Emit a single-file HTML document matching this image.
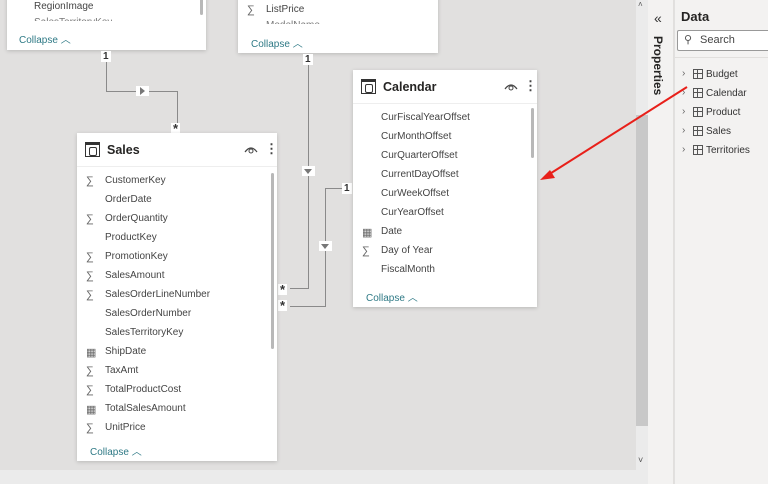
<!DOCTYPE html><html><head><style>
*{margin:0;padding:0;box-sizing:border-box}
body{width:768px;height:484px;overflow:hidden;background:#e1e0df;font-family:"Liberation Sans",sans-serif;position:relative;font-size:10px;color:#333}
.card{position:absolute;background:#fff;box-shadow:0 1px 4px rgba(0,0,0,.18)}
.hdr{height:34px;border-bottom:1px solid #eee;display:flex;align-items:center;padding-left:8px;font-size:12.5px;font-weight:bold;color:#252423}
.ti{width:15px;height:15px;border:1.5px solid #333;border-top-width:3px;margin-right:7px;position:relative}
.ti:after{content:"";position:absolute;left:3px;top:2px;width:6px;height:7px;border:1px solid #333;border-radius:2px}
.row{position:absolute;left:28px;font-size:10px;color:#444}
.ic{position:absolute;left:-19px;top:0px;font-size:11px;color:#666}
.col{position:absolute;font-size:10px;color:#2f7a86}
.lab{position:absolute;background:#fff;font-size:10px;font-weight:bold;color:#333;padding:0 2px;line-height:11px}
.ln{position:absolute;background:#8a8a8a}
.tri{position:absolute;width:13px;height:10px;background:#fff}
.sb{position:absolute;width:3px;background:#b8b8b8;border-radius:2px}
.eye{position:absolute}
.dots{position:absolute;font-size:13px;font-weight:bold;color:#444}
.d{position:absolute;left:700px;font-size:10px;color:#333}
.g{position:absolute;left:-13px;top:0;width:10px;height:10px;border:1px solid #555;background:linear-gradient(#555,#555) 3px 0/1px 10px no-repeat,linear-gradient(#555,#555) 0 3px/10px 1px no-repeat}
.ch{position:absolute;left:-24px;top:-1px;color:#666;font-size:10px}
</style></head><body>
<div class="card" style="left:7px;top:-5px;width:199px;height:55px">
<div class="row" style="left:27px;top:6px">RegionImage</div>
<div class="row" style="left:27px;top:22px;height:4px;overflow:hidden;color:#777">SalesTerritoryKey</div>
<div class="sb" style="left:193px;top:0;height:20px"></div>
<div class="col" style="left:12px;top:36px">Collapse ︿</div></div>
<div class="card" style="left:238px;top:-5px;width:200px;height:58px">
<div class="row" style="left:28px;top:9px"><span class="ic">∑</span>ListPrice</div>
<div class="row" style="left:28px;top:25px;height:4px;overflow:hidden;color:#777">ModelName</div>
<div class="col" style="left:13px;top:40px">Collapse ︿</div></div>
<div class="ln" style="left:106px;top:60px;width:1px;height:31px"></div>
<div class="ln" style="left:106px;top:91px;width:71px;height:1px"></div>
<div class="ln" style="left:177px;top:91px;width:1px;height:37px"></div>
<div class="lab" style="left:101px;top:51px">1</div>
<div class="tri" style="left:136px;top:86px"><div style="position:absolute;left:4px;top:1px;border-left:5px solid #777;border-top:4px solid transparent;border-bottom:4px solid transparent"></div></div>
<div class="lab" style="left:171px;top:123px;font-size:13px">*</div>
<div class="ln" style="left:308px;top:60px;width:1px;height:228px"></div>
<div class="ln" style="left:290px;top:288px;width:19px;height:1px"></div>
<div class="lab" style="left:303px;top:54px">1</div>
<div class="tri" style="left:302px;top:166px"><div style="position:absolute;left:2px;top:3px;border-top:5px solid #777;border-left:4px solid transparent;border-right:4px solid transparent"></div></div>
<div class="lab" style="left:278px;top:284px;font-size:13px">*</div>
<div class="ln" style="left:325px;top:188px;width:18px;height:1px"></div>
<div class="ln" style="left:325px;top:188px;width:1px;height:118px"></div>
<div class="ln" style="left:290px;top:306px;width:36px;height:1px"></div>
<div class="lab" style="left:342px;top:183px">1</div>
<div class="tri" style="left:319px;top:241px"><div style="position:absolute;left:2px;top:3px;border-top:5px solid #777;border-left:4px solid transparent;border-right:4px solid transparent"></div></div>
<div class="lab" style="left:278px;top:300px;font-size:13px">*</div>
<div class="card" style="left:77px;top:133px;width:200px;height:328px">
<div class="hdr"><div class="ti"></div>Sales</div>
<svg class="eye" style="left:167px;top:11px" width="14" height="10"><path d="M1 8 Q7 0 13 8" fill="none" stroke="#444" stroke-width="1.2"/><circle cx="7" cy="7" r="2" fill="none" stroke="#444"/></svg><div class="dots" style="left:188px;top:8px">⋮</div>
<div class="sb" style="left:194px;top:40px;height:176px"></div>
<div class="row" style="top:42px"><span class="ic">∑</span>CustomerKey</div>
<div class="row" style="top:61px">OrderDate</div>
<div class="row" style="top:80px"><span class="ic">∑</span>OrderQuantity</div>
<div class="row" style="top:99px">ProductKey</div>
<div class="row" style="top:118px"><span class="ic">∑</span>PromotionKey</div>
<div class="row" style="top:137px"><span class="ic">∑</span>SalesAmount</div>
<div class="row" style="top:156px"><span class="ic">∑</span>SalesOrderLineNumber</div>
<div class="row" style="top:175px">SalesOrderNumber</div>
<div class="row" style="top:194px">SalesTerritoryKey</div>
<div class="row" style="top:213px"><span class="ic" style="font-size:11px">▦</span>ShipDate</div>
<div class="row" style="top:232px"><span class="ic">∑</span>TaxAmt</div>
<div class="row" style="top:251px"><span class="ic">∑</span>TotalProductCost</div>
<div class="row" style="top:270px"><span class="ic" style="font-size:11px">▦</span>TotalSalesAmount</div>
<div class="row" style="top:289px"><span class="ic">∑</span>UnitPrice</div>
<div class="col" style="left:13px;top:310px">Collapse ︿</div></div>
<div class="card" style="left:353px;top:70px;width:184px;height:237px">
<div class="hdr"><div class="ti"></div>Calendar</div>
<svg class="eye" style="left:151px;top:11px" width="14" height="10"><path d="M1 8 Q7 0 13 8" fill="none" stroke="#444" stroke-width="1.2"/><circle cx="7" cy="7" r="2" fill="none" stroke="#444"/></svg><div class="dots" style="left:171px;top:8px">⋮</div>
<div class="sb" style="left:178px;top:38px;height:50px"></div>
<div class="row" style="top:42px">CurFiscalYearOffset</div>
<div class="row" style="top:61px">CurMonthOffset</div>
<div class="row" style="top:80px">CurQuarterOffset</div>
<div class="row" style="top:99px">CurrentDayOffset</div>
<div class="row" style="top:118px">CurWeekOffset</div>
<div class="row" style="top:137px">CurYearOffset</div>
<div class="row" style="top:156px"><span class="ic" style="font-size:11px">▦</span>Date</div>
<div class="row" style="top:175px"><span class="ic">∑</span>Day of Year</div>
<div class="row" style="top:194px">FiscalMonth</div>
<div class="col" style="left:13px;top:219px">Collapse ︿</div></div>
<div style="position:absolute;left:636px;top:0;width:12px;height:484px;background:#ebebeb"></div>
<div style="position:absolute;left:636px;top:115px;width:12px;height:311px;background:#c8c8c8"></div>
<div style="position:absolute;left:638px;top:0;font-size:8px;color:#555">˄</div>
<div style="position:absolute;left:638px;top:455px;font-size:9px;color:#555">˅</div>
<div style="position:absolute;left:0;top:470px;width:636px;height:14px;background:#ebebeb"></div>
<div style="position:absolute;left:648px;top:0;width:26px;height:484px;background:#f3f2f1;border-right:1px solid #e1dfdd"></div>
<div style="position:absolute;left:654px;top:10px;font-size:14px;color:#333">«</div>
<div style="position:absolute;left:651px;top:36px;writing-mode:vertical-rl;font-size:12px;font-weight:bold;color:#252423">Properties</div>
<div style="position:absolute;left:675px;top:0;width:93px;height:484px;background:#f3f2f1"></div>
<div style="position:absolute;left:681px;top:9px;font-size:13px;font-weight:bold;color:#252423">Data</div>
<div style="position:absolute;left:677px;top:30px;width:95px;height:21px;border:1px solid #999;border-radius:2px;background:#fff"></div>
<div style="position:absolute;left:684px;top:33px;font-size:11px;color:#555">⚲</div>
<div style="position:absolute;left:700px;top:34px;font-size:11px;color:#444">Search</div>
<div style="position:absolute;left:675px;top:57px;width:93px;height:1px;background:#e1dfdd"></div>
<div class="d" style="left:706px;top:69px"><span class="ch">›</span><span class="g"></span>Budget</div>
<div class="d" style="left:706px;top:88px"><span class="ch">›</span><span class="g"></span>Calendar</div>
<div class="d" style="left:706px;top:107px"><span class="ch">›</span><span class="g"></span>Product</div>
<div class="d" style="left:706px;top:126px"><span class="ch">›</span><span class="g"></span>Sales</div>
<div class="d" style="left:706px;top:145px"><span class="ch">›</span><span class="g"></span>Territories</div>
<svg style="position:absolute;left:0;top:0" width="768" height="484"><line x1="687" y1="87" x2="548" y2="175" stroke="#e8201a" stroke-width="2"/><polygon points="540,180 550,170 555,178" fill="#e8201a"/></svg>
</body></html>
